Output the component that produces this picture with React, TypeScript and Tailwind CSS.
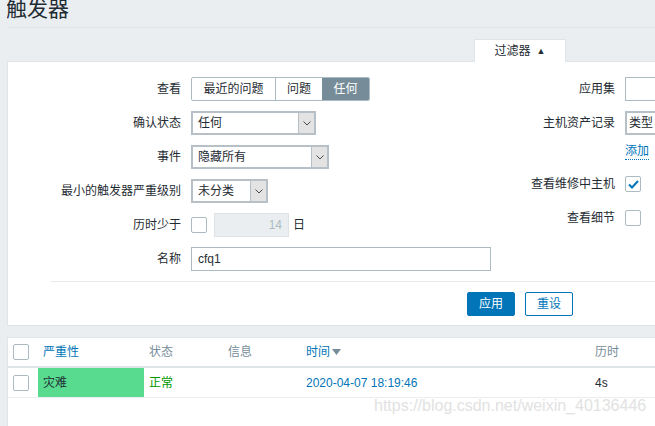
import React from "react";

function Chevron() {
  return (
    <svg width="8" height="5" viewBox="0 0 8 5">
      <path d="M0.5 0.5 L4 4 L7.5 0.5" fill="none" stroke="#4a4a4a" strokeWidth="1" />
    </svg>
  );
}

function Select({ w, text }: { w: number; text: string }) {
  return (
    <div
      className="h-[24px] border-2 border-[#b6c0c6] bg-white flex items-stretch"
      style={{ width: w }}
    >
      <div className="flex-1 pl-[5px] flex items-center text-[#1f2c33]">{text}</div>
      <div className="w-[16px] bg-[#e3e3e3] border-l border-[#b6c0c6] flex items-center justify-center">
        <Chevron />
      </div>
    </div>
  );
}

function Checkbox({ checked }: { checked?: boolean }) {
  return (
    <div className="w-[16px] h-[16px] shrink-0 border border-[#acbbc2] rounded-[2px] bg-white flex items-center justify-center">
      {checked && (
        <svg width="11" height="9" viewBox="0 0 11 9">
          <path d="M1 4.5 L4 7.5 L10 1" fill="none" stroke="#0275b8" strokeWidth="2" />
        </svg>
      )}
    </div>
  );
}

function LRow({ label, children }: { label: string; children: React.ReactNode }) {
  return (
    <div className="h-[24px] flex items-center">
      <div className="w-[183px] shrink-0 pr-[10px] text-right text-[#1f2c33]">{label}</div>
      {children}
    </div>
  );
}

export default function App() {
  return (
    <div className="w-[655px] h-[426px] overflow-hidden bg-[#ebeef0] relative font-['Liberation_Sans','Noto_Sans_CJK_SC',sans-serif] text-[12px] leading-[14px] text-[#1f2c33]">
      <div className="w-[900px] pl-[7px]">
        {/* header */}
        <div className="h-[28px] border-b border-[#dfe4e7] overflow-hidden">
          <div className="text-[21px] leading-[21px] -mt-[2px] -ml-px text-[#1f2c33]">触发器</div>
        </div>
        {/* tab */}
        <div className="mt-[11px] flex">
          <div className="ml-[467px] w-[92px] h-[23px] bg-white border border-b-0 border-[#dfe4e7] relative z-10 flex items-center justify-center gap-[6px] text-[#1f2c33]">
            <span>过滤器</span>
            <span className="text-[9px]">▲</span>
          </div>
        </div>
        {/* filter panel */}
        <div className="-mt-px bg-white border border-[#dfe4e7] pt-[15px] pb-[9px]">
          <div className="flex">
            <div className="w-[487px] shrink-0 flex flex-col gap-[10px]">
              <LRow label="查看">
                <div className="flex h-[24px] border border-[#acbbc2] rounded-[2px] overflow-hidden">
                  <div className="w-[84px] flex items-center justify-center border-r border-[#acbbc2]">最近的问题</div>
                  <div className="w-[46px] flex items-center justify-center">问题</div>
                  <div className="w-[47px] flex items-center justify-center bg-[#768d99] text-white">任何</div>
                </div>
              </LRow>
              <LRow label="确认状态">
                <Select w={125} text="任何" />
              </LRow>
              <LRow label="事件">
                <Select w={138} text="隐藏所有" />
              </LRow>
              <LRow label="最小的触发器严重级别">
                <Select w={77} text="未分类" />
              </LRow>
              <LRow label="历时少于">
                <Checkbox />
                <div className="ml-[7px] w-[75px] h-[24px] bg-[#ebeef0] border border-[#dde3e6] flex items-center justify-end pr-[6px] text-[#acbbc2]">
                  14
                </div>
                <span className="ml-[4px]">日</span>
              </LRow>
              <LRow label="名称">
                <div className="w-[300px] h-[24px] border border-[#acbbc2] flex items-center pl-[6px]">cfq1</div>
              </LRow>
            </div>
            <div className="flex flex-col shrink-0">
              <div className="h-[24px] flex items-center">
                <div className="w-[130px] pr-[10px] text-right">应用集</div>
                <div className="w-[200px] h-[24px] border border-[#acbbc2]"></div>
              </div>
              <div className="mt-[10px] h-[24px] flex items-center">
                <div className="w-[130px] pr-[10px] text-right">主机资产记录</div>
                <div className="w-[120px] h-[24px] border-2 border-[#b6c0c6] flex items-center pl-[2px]">类型</div>
              </div>
              <div className="mt-[8px] flex">
                <div className="w-[130px]"></div>
                <span className="leading-[16px] text-[#0275b8] border-b border-dotted border-[#0275b8]">添加</span>
              </div>
              <div className="mt-[12px] h-[24px] flex items-center">
                <div className="w-[130px] pr-[10px] text-right">查看维修中主机</div>
                <Checkbox checked />
              </div>
              <div className="mt-[10px] h-[24px] flex items-center">
                <div className="w-[130px] pr-[10px] text-right">查看细节</div>
                <Checkbox />
              </div>
            </div>
          </div>
          <div className="mt-[10px] ml-[43px] border-t border-[#e6eaec] pt-[10px] flex">
            <div className="ml-[416px] flex gap-[10px]">
              <div className="w-[48px] h-[24px] bg-[#0275b8] border border-[#0275b8] rounded-[2px] text-white flex items-center justify-center">应用</div>
              <div className="w-[48px] h-[24px] bg-white border border-[#0275b8] rounded-[2px] text-[#0275b8] flex items-center justify-center">重设</div>
            </div>
          </div>
        </div>
        {/* table */}
        <div className="mt-[11px] bg-white border-l border-t border-[#dfe4e7] h-[120px]">
          <div className="h-[30px] border-b-2 border-[#dfe4e7] flex items-center">
            <div className="w-[30px] flex pl-[5px]"><Checkbox /></div>
            <div className="w-[106px] pl-[5px] text-[#0275b8]">严重性</div>
            <div className="w-[79px] pl-[5px] text-[#768d99]">状态</div>
            <div className="w-[78px] pl-[5px] text-[#768d99]">信息</div>
            <div className="w-[289px] pl-[5px] text-[#0275b8] flex items-center gap-[2px]">
              <span>时间</span>
              <svg width="9" height="6" viewBox="0 0 9 6"><path d="M0 0 L9 0 L4.5 6 Z" fill="#768d99" /></svg>
            </div>
            <div className="pl-[5px] text-[#768d99]">历时</div>
          </div>
          <div className="h-[30px] border-b border-[#ebeef0] flex items-stretch">
            <div className="w-[30px] flex items-center pl-[5px]"><Checkbox /></div>
            <div className="w-[106px] pl-[5px] bg-[#59db8f] flex items-center">灾难</div>
            <div className="w-[79px] pl-[5px] flex items-center text-[#009900]">正常</div>
            <div className="w-[78px] pl-[5px]"></div>
            <div className="w-[289px] pl-[5px] flex items-center text-[#0275b8]">2020-04-07 18:19:46</div>
            <div className="pl-[5px] flex items-center">4s</div>
          </div>
        </div>
      </div>
      <div className="absolute left-[374px] top-[397px] text-[16px] leading-[18px] text-[#e2e2e2] font-['Liberation_Sans',sans-serif]">
        https://blog.csdn.net/weixin_40136446
      </div>
    </div>
  );
}
